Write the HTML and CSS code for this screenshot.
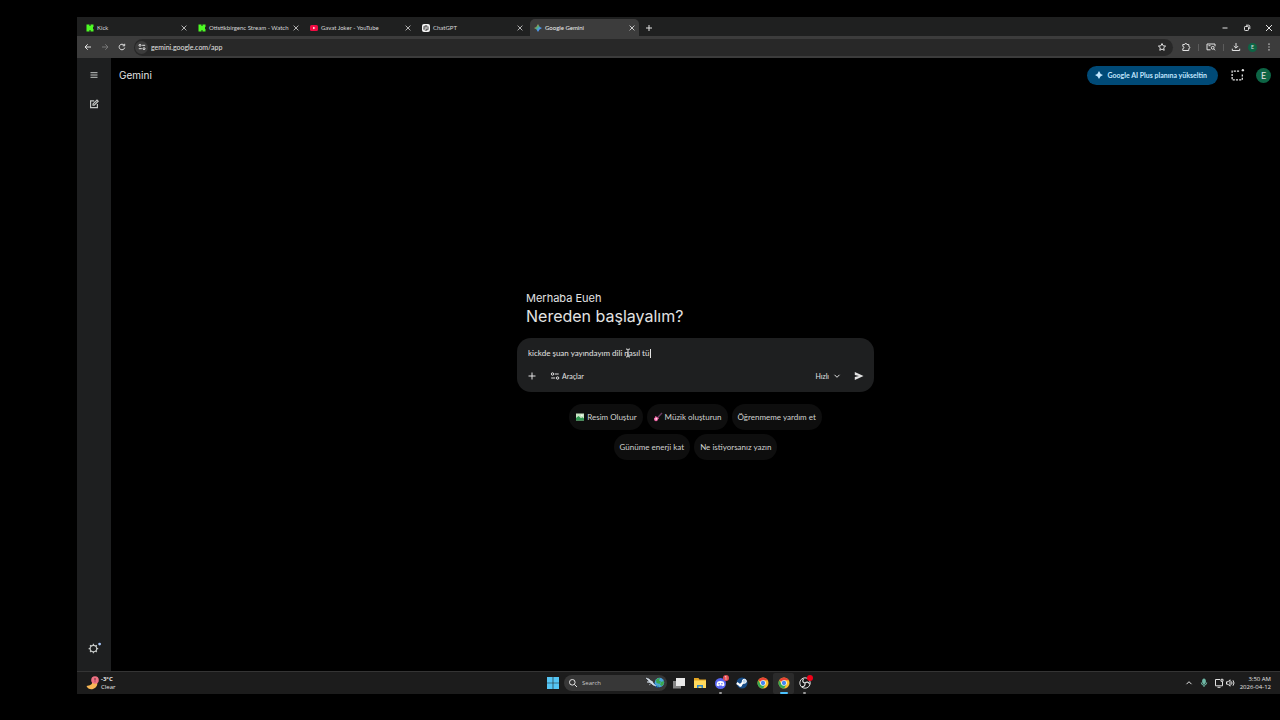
FILE: index.html
```html
<!DOCTYPE html>
<html lang="tr">

<head>
    <meta charset="UTF-8">
    <meta name="viewport" content="width=device-width, initial-scale=1.0">
    <title>Google Gemini</title>
    <link rel="stylesheet" href="styles.css">
</head>

<body>
    <svg class="defs" aria-hidden="true">
        <symbol id="close" viewBox="0 0 10 10"><path d="M2 2l6 6M8 2L2 8" /></symbol>
        <symbol id="kick" viewBox="0 0 8 8"><path fill="#4dfa24" stroke="none" d="M.5 .5h3v1.500h1V.5h3v2.600H7v1.800h.5v2.600h-3V6h-1v1.500h-3z" /></symbol>
        <symbol id="chrome" viewBox="0 0 24 24">
            <g stroke="none">
                <circle cx="12" cy="12" r="11" fill="#fbc02d" />
                <path fill="#e84335" d="M12 12L2.5 6.5A11 11 0 0 1 21.5 6.5H12z" />
                <path fill="#34a853" d="M12 12l-4.8 2.8L2.5 6.5A11 11 0 0 0 12 23l4.8-8.2z" />
                <circle cx="12" cy="12" r="5.6" fill="#fff" />
                <circle cx="12" cy="12" r="4.3" fill="#4285f4" />
            </g>
        </symbol>
    </svg>

    <div class="window">
        <div class="tab-strip">
            <div class="tab">
                <svg class="favicon"><use href="#kick" /></svg>
                <span class="tab-title">Kick</span>
                <button class="tab-close" aria-label="Close Kick"><svg><use href="#close" /></svg></button>
            </div>
            <div class="tab">
                <svg class="favicon"><use href="#kick" /></svg>
                <span class="tab-title">Otistikbirgenc Stream - Watch</span>
                <button class="tab-close" aria-label="Close stream"><svg><use href="#close" /></svg></button>
            </div>
            <div class="tab">
                <svg class="favicon" viewBox="0 0 8 8"><rect y="1" width="8" height="6" rx="1.5" fill="#f00b42" stroke="none" /><path d="M3.2 2.7v2.6L5.4 4z" fill="#fff" stroke="none" /></svg>
                <span class="tab-title">Gavat Joker - YouTube</span>
                <button class="tab-close" aria-label="Close YouTube"><svg><use href="#close" /></svg></button>
            </div>
            <div class="tab">
                <svg class="favicon" viewBox="0 0 16 16"><rect width="16" height="16" rx="4" fill="#f4f4f4" stroke="none" /><g stroke="#444" stroke-width="1.2"><path d="M8 2.7l4.6 2.6v5.4L8 13.3l-4.6-2.6V5.3z" /><path d="M8 5.2l2.4 1.4v2.8L8 10.8 5.6 9.4V6.6zM8 2.7l2.4 3.9M12.6 10.7l-4.6.1M3.4 5.3L8 5.2M3.4 10.7l2.2-4.1M8 13.3l2.4-3.9" /></g></svg>
                <span class="tab-title">ChatGPT</span>
                <button class="tab-close" aria-label="Close ChatGPT"><svg><use href="#close" /></svg></button>
            </div>
            <div class="tab active">
                <svg class="favicon" viewBox="0 0 16 16">
                    <linearGradient id="spark" x1="0" y1="0" x2="1" y2="1"><stop offset=".2" stop-color="#e8784c" /><stop offset=".4" stop-color="#52b174" /><stop offset=".65" stop-color="#4d96f5" /></linearGradient>
                    <path fill="url(#spark)" stroke="none" d="M8 0q1.900 6.100 8 8-6.100 1.900-8 8-1.900-6.100-8-8 6.100-1.900 8-8z" />
                </svg>
                <span class="tab-title">Google Gemini</span>
                <button class="tab-close" aria-label="Close Gemini"><svg><use href="#close" /></svg></button>
            </div>
            <button class="new-tab" aria-label="New tab"><svg viewBox="0 0 10 10"><path d="M5 2v6M2 5h6" /></svg></button>
            <div class="window-buttons">
                <button aria-label="Minimize"><svg viewBox="0 0 10 10"><path d="M2.5 5h5" /></svg></button>
                <button aria-label="Restore"><svg viewBox="0 0 10 10"><rect x="2.5" y="3.5" width="4" height="4" rx=".8" /><path d="M4 2.2h2.5a1.3 1.3 0 0 1 1.3 1.3V6" /></svg></button>
                <button aria-label="Close window"><svg><use href="#close" /></svg></button>
            </div>
        </div>

        <div class="toolbar">
            <div class="nav-buttons">
                <button aria-label="Back"><svg viewBox="0 0 10 10"><path d="M8 5H2.2M4.7 2.3L2 5l2.7 2.7" /></svg></button>
                <button class="dim" aria-label="Forward"><svg viewBox="0 0 10 10"><path d="M2 5h5.8M5.3 2.3L8 5 5.3 7.7" /></svg></button>
                <button aria-label="Reload"><svg viewBox="0 0 10 10"><path d="M7.7 5.6A2.8 2.8 0 1 1 7.2 3.3M7.7 1.8v2H5.6" /></svg></button>
            </div>
            <div class="address-bar">
                <button class="site-info" aria-label="Site information"><svg viewBox="0 0 10 10"><circle cx="3" cy="3.3" r="1" /><path d="M5.2 3.3h3M1.8 6.7h3" /><circle cx="7" cy="6.7" r="1" /></svg></button>
                <input class="address" type="text" aria-label="Address" value="gemini.google.com/app">
                <button class="star" aria-label="Bookmark"><svg viewBox="0 0 10 10"><path d="M5 1.5l1.1 2.3 2.5.3-1.9 1.7.5 2.5L5 7.1 2.8 8.3l.5-2.5L1.4 4.1l2.5-.3z" /></svg></button>
            </div>
            <div class="tools">
                <button aria-label="Extensions"><svg viewBox="0 0 10 10"><path d="M1.8 2.5h1.9a1.1 1.1 0 0 1 2.2 0h1.9v2a1 1 0 0 1 0 2v2h-6V6.6a1.1 1.1 0 0 0 0-2.2z" /></svg></button>
                <span class="separator"></span>
                <button aria-label="Lens"><svg viewBox="0 0 10 10"><path d="M4.5 7.8H1V2h8v2.3M2.5 3.7h2" /><circle cx="6.7" cy="5.8" r="1.4" /><path d="M7.7 6.8L9 8.3" /></svg></button>
                <span class="separator"></span>
                <button aria-label="Downloads"><svg viewBox="0 0 10 10"><path d="M5 1v5M2.8 4L5 6.2 7.2 4M1.3 6.7v1.8h7.4V6.7" /></svg></button>
                <button class="profile" aria-label="Profile">E</button>
                <button aria-label="Menu"><svg viewBox="0 0 10 10"><path class="solid" d="M4.4 1.5h1.2v1.2H4.4zM4.4 4.4h1.2v1.2H4.4zM4.4 7.3h1.2v1.2H4.4z" /></svg></button>
            </div>
        </div>

        <div class="app">
            <nav class="sidebar">
                <button aria-label="Menü"><svg viewBox="0 0 10 10"><path d="M1.5 2.7h7M1.5 5h7M1.5 7.3h7" /></svg></button>
                <button aria-label="Yeni sohbet"><svg viewBox="0 0 10 10"><path stroke-width="1.200" d="M5.2 1.8H1.6v6.800h6.800V5M4 6.200V4.900L8 1l1.200 1.200-4 4z" /></svg></button>
                <button class="settings" aria-label="Ayarlar"><svg viewBox="0 0 12 12"><circle cx="5.5" cy="6.5" r="2.8" /><path d="M5.5 2.4v1.3M5.5 9.3v1.3M1.4 6.5h1.3M8.3 6.5h1.3M2.6 3.6l.9.9M7.5 8.5l.9.9M2.6 9.4l.9-.9M7.5 4.5l.9-.9" /><circle cx="10.8" cy="2.6" r="1.200" fill="#a8c7fa" stroke="none" /></svg></button>
            </nav>

            <main class="main">
                <header class="header">
                    <a class="brand" href="#">Gemini</a>
                    <button class="upgrade"><svg viewBox="0 0 10 10"><path class="solid" d="M5 1Q5.900 4.100 9 5 5.900 5.900 5 9 4.100 5.900 1 5 4.100 4.100 5 1z" /></svg>Google AI Plus planına yükseltin</button>
                    <button class="temp-chat" aria-label="Geçici sohbet"><svg viewBox="0 0 14 14"><path stroke-dasharray="2 1" stroke-width="1.2" d="M8.5 3H2v8h9.5V6" /><circle cx="12" cy="2" r="1.1" class="solid" /></svg></button>
                    <button class="account" aria-label="Hesap">E</button>
                </header>

                <section class="welcome">
                    <p class="greeting">Merhaba Eueh</p>
                    <h1>Nereden başlayalım?</h1>

                    <form class="prompt">
                        <div class="prompt-field">
                            <input class="prompt-text" type="text" aria-label="İstem" value="kickde şuan yayındayım dili nasıl tü">
                            <span class="caret"></span>
                            <svg class="pointer" viewBox="0 0 6 10"><path d="M1 1q2 0 2 1 0-1 2-1M3 2v6M1 9q2 0 2-1 0 1 2 1" /></svg>
                        </div>
                        <div class="prompt-actions">
                            <button type="button" aria-label="Ekle"><svg viewBox="0 0 10 10"><path d="M5 1.5v7M1.5 5h7" /></svg></button>
                            <button type="button" class="prompt-tools"><svg viewBox="0 0 10 10"><circle cx="2.5" cy="3" r="1.2" /><path d="M4.7 3h4M1.2 7h4" /><circle cx="7.6" cy="7" r="1.2" /></svg>Araçlar</button>
                            <button type="button" class="model">Hızlı<svg viewBox="0 0 10 10"><path d="M2.5 3.8L5 6.3l2.5-2.5" /></svg></button>
                            <button class="send" aria-label="Gönder"><svg viewBox="0 0 10 10"><path class="solid" d="M.8 1l8.7 4L.8 9V6L5 5 .8 4z" /></svg></button>
                        </div>
                    </form>

                    <div class="chips">
                        <button><svg viewBox="0 0 10 10"><rect x="1" y="1.5" width="8" height="7" fill="#c9e6c5" stroke="none" /><path d="M1 8.5V6l2.5-2L6 6.3l1.3-1L9 6.5v2z" fill="#2f9651" stroke="none" /><circle cx="6.8" cy="3.3" r=".8" fill="#fff" stroke="none" /></svg>Resim Oluştur</button>
                        <button><svg viewBox="0 0 10 10"><path d="M5 5.2L9 1" stroke="#6d3b62" stroke-width="1.4" /><path d="M2.2 4.2q1.3-.3 1.6.7l1.8.9q.6 1.2-.6 1.5Q4.7 9.4 2.8 9.2 1 9 .9 7q0-1.4 1.2-1.5z" fill="#f56aab" stroke="none" /><circle cx="3.2" cy="6.9" r=".8" fill="#fff" stroke="none" /></svg>Müzik oluşturun</button>
                        <button>Öğrenmeme yardım et</button>
                        <button>Günüme enerji kat</button>
                        <button>Ne istiyorsanız yazın</button>
                    </div>
                </section>
            </main>
        </div>

        <footer class="taskbar">
            <a class="weather" href="#">
                <svg viewBox="0 0 14 14"><path d="M6 2q2.5 7-5.5 8 2 4 6.500 3Q12.500 11 11 5z" fill="#f8b755" stroke="none" /><circle cx="9" cy="4" r="3.800" fill="#ef7183" stroke="none" /><path d="M9 2v2.500M9 5.500v.6" stroke="#64303b" /></svg>
                <span class="weather-text"><b>-3°C</b><span>Clear</span></span>
            </a>
            <div class="task-icons">
                <button aria-label="Start"><svg viewBox="0 0 12 12"><path fill="#55c5f4" stroke="none" d="M0 0h5.700v5.700H0zM6.300 0H12v5.700H6.300zM0 6.300h5.700V12H0zM6.300 6.300H12V12H6.300z" /></svg></button>
                <label class="search">
                    <svg class="search-glass" viewBox="0 0 10 10"><circle cx="4.300" cy="4.300" r="2.800" /><path d="M6.400 6.400L9 9" /></svg>
                    <input type="text" placeholder="Search" aria-label="Search">
                    <svg class="search-art" viewBox="0 0 20 12">
                        <path d="M7 7l5 4 3-1-4-5z" fill="#1a4f91" stroke="none" />
                        <path d="M1 1l3 1 7 7-3-1zM2 5l5-1 1 2zM4 8l4-3" fill="#d4dde8" stroke="#d4dde8" stroke-width=".6" />
                        <circle cx="14.500" cy="5.500" r="4.700" fill="#4aa3dc" stroke="none" />
                        <path d="M11 3q2-2.500 4-2l-1 2.500 2 1-1.500 2.500-3-1zM16 5l3-1q.5 3-2 5l-2-1zM12 8l2 1v1z" fill="#39a84f" stroke="none" />
                    </svg>
                </label>
                <button aria-label="Task view"><svg viewBox="0 0 12 12"><path fill="#858585" stroke="none" d="M0 4h8v7.500H0z" /><path fill="#e9e9e9" stroke="none" d="M3 1h9v8H3z" /></svg></button>
                <button aria-label="Explorer"><svg viewBox="0 0 12 12"><path fill="#e5a623" stroke="none" d="M0 1h4.500l1 1.500H12V11H0z" /><path fill="#ffd95d" stroke="none" d="M0 3.500h12V11H0z" /><path fill="#2d85c9" stroke="none" d="M3 11V8h6v3H7.500V9.500h-3V11z" /></svg></button>
                <button class="running" aria-label="Discord"><svg viewBox="0 0 12 12"><circle cx="5.500" cy="6.500" r="5.500" fill="#5865f2" stroke="none" /><path fill="#fff" stroke="none" d="M2.400 4.700q3.100-1.400 6.200 0 1 2.300.8 3.800-1 .8-2 .8l-.4-.7H4l-.4.7q-1 0-2-.8-.200-1.500.8-3.800z" /><circle cx="4.100" cy="6.800" r=".8" fill="#5865f2" stroke="none" /><circle cx="6.900" cy="6.800" r=".8" fill="#5865f2" stroke="none" /></svg><span class="badge">1</span></button>
                <button aria-label="Steam"><svg viewBox="0 0 12 12"><circle cx="6" cy="6" r="5.500" fill="#174c86" stroke="none" /><path stroke="#fff" stroke-width="2.200" d="M.8 6l3.500 2.300 3.400-3.500" /><circle cx="8.300" cy="4.300" r="2" fill="#b9d5ec" stroke="#fff" /><circle cx="4.400" cy="8.300" r="1.500" fill="#fff" stroke="none" /></svg></button>
                <button aria-label="Chrome"><svg><use href="#chrome" /></svg></button>
                <button class="running current" aria-label="Chrome window"><svg><use href="#chrome" /></svg></button>
                <button class="running" aria-label="OBS"><svg viewBox="0 0 12 12"><circle cx="6" cy="6" r="5.200" fill="#151515" stroke="#ddd" /><path stroke="#ddd" stroke-width="1.200" d="M6 6Q2.500 5 4.500 1.800M6 6q2.800-2.200 4.600 1.200M6 6q.5 3.800-3.400 3.600" /></svg><span class="badge record"></span></button>
            </div>
            <div class="tray">
                <button aria-label="Hidden icons"><svg viewBox="0 0 10 10"><path d="M2.500 6.200L5 3.700l2.500 2.500" /></svg></button>
                <button class="mic" aria-label="Microphone"><svg viewBox="0 0 10 10"><rect x="3.700" y="1" width="2.600" height="4.800" rx="1.300" fill="#6fb9a7" /><path d="M2.300 4.500q0 2.700 2.700 2.700t2.700-2.700M5 7.200V9" /></svg></button>
                <button class="status" aria-label="Network and sound"><svg viewBox="0 0 10 10"><path d="M6 1.500H1.500v6.300h7V4M3.500 9.300h3M7 1.300h2v2H7z" /></svg><svg viewBox="0 0 10 10"><path d="M1.500 3.800H3l2-2v6.400l-2-2H1.500zM6.500 3.500q1 1.500 0 3M8 2.300q2 2.700 0 5.400" /></svg></button>
                <time class="clock"><span>3:50 AM</span><span>2026-04-12</span></time>
            </div>
        </footer>
    </div>
</body>

</html>
```
FILE: styles.css
```css
* {
    box-sizing: border-box;
}

body {
    margin: 0;
    padding: 17px 0 26px 77px;
    min-height: 100vh;
    display: flex;
    background: #000;
    color: #e3e3e3;
    font-family: Lato, "Open Sans", sans-serif;
    font-size: 7px;
}

button,
input {
    margin: 0;
    padding: 0;
    border: none;
    outline: none;
    background: none;
    color: inherit;
    font: inherit;
}

button {
    display: flex;
    align-items: center;
    justify-content: center;
    flex: none;
    cursor: pointer;
}

input {
    min-width: 0;
}

a {
    color: inherit;
    text-decoration: none;
}

svg {
    display: block;
    flex: none;
    width: 10px;
    height: 10px;
    fill: none;
    stroke: currentColor;
}

.defs {
    position: absolute;
    width: 0;
    height: 0;
}

.solid {
    fill: currentColor;
    stroke: none;
}

.window {
    flex: 1;
    min-width: 0;
    display: flex;
    flex-direction: column;
}

/* browser tabs */
.tab-strip {
    display: flex;
    align-items: flex-end;
    height: 19px;
    padding-left: 5px;
    background: #1f2020;
    font-size: 6px;
}

.tab {
    display: flex;
    align-items: center;
    width: 112px;
    height: 17px;
    padding: 0 6px 0 4px;
    gap: 3px;
    color: #d8d8d8;
}

.tab.active {
    width: 109px;
    padding-right: 3px;
    border-radius: 5px 5px 0 0;
    background: #3c3c3c;
    color: #eee;
}

.favicon {
    width: 8px;
    height: 8px;
}

.tab-title {
    flex: 1;
    white-space: nowrap;
}

.tab-close svg {
    width: 8px;
    height: 8px;
}

.new-tab {
    width: 20px;
    height: 17px;
}

.window-buttons {
    display: flex;
    margin-left: auto;
    height: 17px;
}

.window-buttons button {
    width: 22px;
}

/* address row */
.toolbar {
    display: flex;
    align-items: center;
    height: 22px;
    background: #3c3c3c;
}

.nav-buttons {
    display: flex;
    padding: 0 4px 0 2px;
}

.nav-buttons button {
    width: 17px;
}

.dim {
    color: #777;
}

.address-bar {
    flex: 1;
    display: flex;
    align-items: center;
    height: 17px;
    padding: 0 6px 0 1px;
    border-radius: 9px;
    background: #282828;
}

.site-info {
    width: 13px;
    height: 13px;
    border-radius: 50%;
    background: #3c3c3c;
}

.address {
    flex: 1;
    margin-left: 3px;
}

.tools {
    display: flex;
    align-items: center;
    gap: 7px;
    padding: 0 6px 0 8px;
}

.separator {
    width: 1px;
    height: 7px;
    background: #5c5c5c;
}

.profile {
    width: 9px;
    height: 9px;
    border-radius: 50%;
    background: #0d6545;
    font-size: 5px;
}

/* gemini */
.app {
    flex: 1;
    display: flex;
}

.sidebar {
    display: flex;
    flex-direction: column;
    align-items: center;
    gap: 9px;
    width: 34px;
    padding: 7px 0 13px;
    background: #1e1f20;
    color: #c4c7c5;
}

.sidebar button {
    width: 20px;
    height: 20px;
}

.settings {
    margin-top: auto;
}

.settings svg {
    width: 14px;
    height: 14px;
}

.main {
    flex: 1;
    display: flex;
    flex-direction: column;
    font-size: 8px;
}

.header {
    display: flex;
    align-items: center;
    height: 34px;
    padding: 0 9px 0 8px;
}

.brand {
    margin-right: auto;
    font-family: Inter, sans-serif;
    font-size: 10px;
}

.upgrade {
    height: 19px;
    padding: 0 11px 0 7px;
    gap: 3px;
    border-radius: 10px;
    background: #004a77;
    color: #c2e7ff;
    font-size: 7px;
    font-weight: 700;
}

.temp-chat {
    margin: 0 11px 0 12px;
}

.temp-chat svg {
    width: 15px;
    height: 15px;
}

.account {
    width: 15px;
    height: 15px;
    border-radius: 50%;
    background: #0d6545;
    font-size: 9px;
}

.welcome {
    flex: 1;
    display: flex;
    flex-direction: column;
    justify-content: center;
    width: 357px;
    margin: 0 auto;
    padding-bottom: 12px;
}

.greeting {
    margin: 0 9px;
    font-family: Inter, sans-serif;
    font-size: 11px;
    line-height: 14px;
}

.welcome h1 {
    margin: 0 9px 11px;
    font-family: Inter, sans-serif;
    font-size: 16px;
    font-weight: 400;
    line-height: 22px;
}

.prompt {
    display: flex;
    flex-direction: column;
    gap: 9px;
    padding: 9px 10px 8px;
    border-radius: 14px;
    background: #1e1f20;
}

.prompt-field {
    position: relative;
    display: flex;
    padding-left: 1px;
}

.prompt-text {
    flex: 1;
    height: 12px;
}

.caret {
    position: absolute;
    left: 123px;
    top: 2px;
    width: 1px;
    height: 9px;
    background: #e3e3e3;
}

.pointer {
    position: absolute;
    left: 98px;
    top: 1px;
    width: 6px;
    height: 10px;
}

.prompt-actions {
    display: flex;
    align-items: center;
    height: 16px;
    font-size: 7px;
}

.prompt-tools {
    gap: 2px;
    margin-left: 13px;
}

.model {
    gap: 3px;
    margin-left: auto;
}

.send {
    margin-left: 12px;
}

.chips {
    display: flex;
    flex-wrap: wrap;
    justify-content: center;
    gap: 4px;
    margin: 12px 48px 0;
}

.chips button {
    height: 26px;
    padding: 0 6px;
    gap: 2px;
    border-radius: 13px;
    background: #0e0e0e;
    color: #d0d2d0;
}

/* taskbar */
.taskbar {
    display: grid;
    grid-template-columns: 1fr auto 1fr;
    align-items: center;
    height: 23px;
    border-top: 1px solid #343434;
    background: #1c1c1c;
    font-family: "Open Sans", sans-serif;
    font-size: 6px;
}

.weather {
    display: flex;
    align-items: center;
    gap: 1px;
    padding-left: 9px;
}

.weather svg {
    width: 14px;
    height: 14px;
}

.weather-text,
.clock {
    display: flex;
    flex-direction: column;
    line-height: 8px;
}

.task-icons {
    display: flex;
    align-items: center;
}

.task-icons button {
    position: relative;
    width: 21px;
    height: 21px;
}

.task-icons button svg {
    width: 12px;
    height: 12px;
}

.search {
    display: flex;
    align-items: center;
    width: 103px;
    height: 16px;
    margin: 0 1px;
    padding: 0 2px 0 4px;
    gap: 4px;
    border-radius: 8px;
    background: #373737;
}

.search input {
    flex: 1;
}

.search input::placeholder {
    color: #c8c8c8;
}

.search-art {
    width: 20px;
    height: 12px;
}

.running::after {
    content: "";
    position: absolute;
    bottom: 0;
    width: 3px;
    height: 2px;
    border-radius: 1px;
    background: #999;
}

.current {
    border-radius: 2px;
    background: #2b2b2b;
}

.current::after {
    width: 8px;
    background: #4cc2ff;
}

.badge {
    position: absolute;
    top: 2px;
    right: 2px;
    width: 6px;
    height: 6px;
    border-radius: 50%;
    background: #e34d54;
    color: #fff;
    font-size: 5px;
    line-height: 6px;
}

.record {
    background: #f00018;
}

.tray {
    display: flex;
    align-items: center;
    justify-content: flex-end;
    gap: 5px;
    padding-right: 9px;
}

.mic {
    color: #6fb9a7;
}

.status {
    gap: 1px;
}

.clock {
    text-align: right;
}
```
